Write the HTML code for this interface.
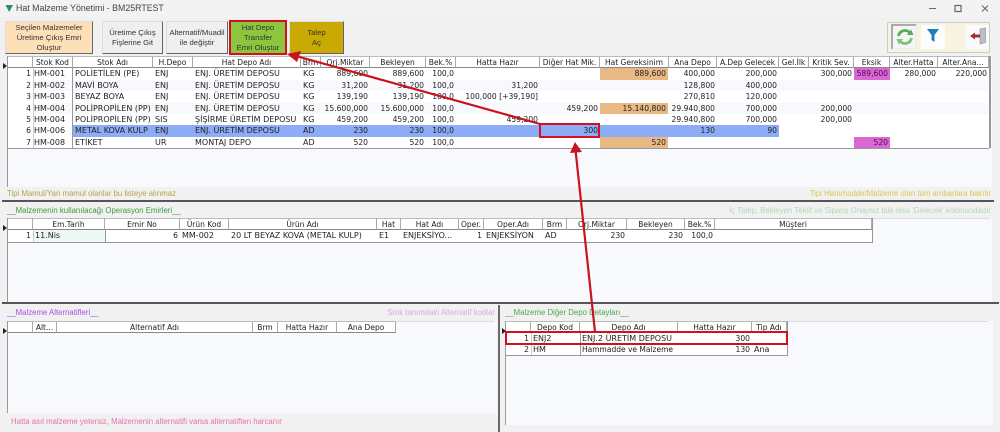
<!DOCTYPE html>
<html><head><meta charset="utf-8"><style>
html,body{margin:0;padding:0}
body{width:1000px;height:432px;position:relative;overflow:hidden;background:#f1f1f1;font-family:"DejaVu Sans","Liberation Sans",sans-serif;font-size:7.5px;color:#222}
div,span,b{position:absolute;box-sizing:border-box;white-space:nowrap;font-weight:normal}
.lb{font-family:"Liberation Sans",sans-serif;font-size:7.8px;line-height:10px}
.btn{font-family:"Liberation Sans",sans-serif;font-size:7.7px;line-height:10px;text-align:center;white-space:normal;color:#333;border-right:1.5px solid #666;border-bottom:1.5px solid #666;border-top:1px solid #ddd;border-left:1px solid #ddd;overflow:hidden}
.g{background:#f8f9fc}
.h{background:#fff;border-right:1px solid #aaa;border-bottom:1.5px solid #888;border-top:1px solid #bbb;text-align:center;height:12px;line-height:11px;overflow:hidden}
.c{height:11.5px;line-height:11.5px;padding:0 2px;overflow:hidden;font-size:8px}
.n{text-align:right;font-size:7.6px}
.sep{background:#555;height:2px;left:2px;width:992px}
.ln{background:#999}
.tl{background:#ddd;height:1px}
.sel{background:#8cacf6}
.or{background:#e8b985}
.mg{background:#da68d2}
.box{border:2px solid #d3101f}
</style></head><body>
<!-- title bar -->
<div style="left:0;top:0;width:1000px;height:17px;background:#f3f3f3"></div>
<svg style="position:absolute;left:5px;top:4px" width="9" height="9"><path d="M0.5 1H8L4.2 8Z" fill="#2a8a7a"/></svg>
<div class="lb" style="left:16px;top:3px;color:#444;font-size:8.8px">Hat Malzeme Yönetimi - BM25RTEST</div>
<svg style="position:absolute;left:925px;top:3px" width="70" height="12" fill="none" stroke="#666"><path d="M4 5.500H11"/><rect x="30" y="2.500" width="6" height="6" stroke-width="1.200"/><path d="M57 2.500L63 8.500M63 2.500L57 8.500"/></svg>
<!-- toolbar -->
<div class="btn" style="left:5px;top:21px;width:88px;height:33px;background:#fde0b8;padding-top:1px">Seçilen Malzemeler<br>Üretime Çıkış Emri<br>Oluştur</div>
<div class="btn" style="left:102px;top:21px;width:61px;height:33px;background:#efefef;padding-top:6px">Üretime Çıkış<br>Fişlerine Git</div>
<div class="btn" style="left:166px;top:21px;width:62px;height:33px;background:#efefef;padding-top:6px">Alternatif/Muadil<br>ile değiştir</div>
<div class="btn" style="left:230px;top:21px;width:56px;height:34px;background:#8cc63e;padding-top:1px">Hat Depo<br>Transfer<br>Emri Oluştur</div>
<div class="btn" style="left:289px;top:21px;width:55px;height:33px;background:#c9a902;padding-top:6px">Talep<br>Aç</div>
<div style="left:887px;top:22px;width:103px;height:31px;background:#f8f3df;border:1px solid #ccc"></div>
<div style="left:891px;top:24px;width:26px;height:26px;background:#f5f5f5;border:2px solid #aaa;border-right-color:#eee;border-bottom-color:#eee"></div>
<div style="left:921px;top:25px;width:24px;height:24px;background:#fdfdfd"></div>
<div style="left:965px;top:25px;width:24px;height:24px;background:#fafafa"></div>
<svg style="position:absolute;left:896px;top:28px" width="18" height="18" fill="none"><path d="M2.500 8A6.500 6.500 0 0 1 14 5" stroke="#5aa85a" stroke-width="2.800"/><path d="M15.500 10A6.500 6.500 0 0 1 4 13" stroke="#7cc47c" stroke-width="2.800"/><path d="M11 7H17.500L15 1.500Z" fill="#5aa85a"/><path d="M0.500 11H7L3 16.500Z" fill="#7cc47c"/></svg>
<svg style="position:absolute;left:927px;top:29px" width="12" height="14"><path d="M0 0H12L7.500 6V13L4.500 11V6Z" fill="#1f7fb5"/></svg>
<svg style="position:absolute;left:969px;top:27px" width="18" height="18"><path d="M11 2L16.500 1V15.500L11 17Z" fill="#b9c0c4" stroke="#889" stroke-width=".6"/><path d="M1 9L6 5.500V7.500H11V10.500H6V12.500Z" fill="#a82a35"/></svg>

<!-- panel 1 -->
<div class="g" style="left:8px;top:56px;width:984px;height:131px"></div>
<div class="ln" style="left:7px;top:56px;width:1px;height:131px"></div>
<div class="ln" style="left:989px;top:56px;width:1.500px;height:92px"></div>
<div style="left:8px;top:68px;width:981px;height:80px;background:#fff"></div>
<div style="left:33px;top:79.500px;width:956px;height:11.500px;background:#f8f9fc"></div>
<div style="left:33px;top:102.500px;width:956px;height:11.500px;background:#f8f9fc"></div>
<div class="h" style="left:8px;top:56px;width:25px"></div>
<div class="h" style="left:33px;top:56px;width:40px">Stok Kod</div>
<div class="h" style="left:73px;top:56px;width:80px">Stok Adı</div>
<div class="h" style="left:153px;top:56px;width:40px">H.Depo</div>
<div class="h" style="left:193px;top:56px;width:108px">Hat Depo Adı</div>
<div class="h" style="left:301px;top:56px;width:20px">Brm</div>
<div class="h" style="left:321px;top:56px;width:49px">Orj.Miktar</div>
<div class="h" style="left:370px;top:56px;width:56px">Bekleyen</div>
<div class="h" style="left:426px;top:56px;width:30px">Bek.%</div>
<div class="h" style="left:456px;top:56px;width:84px">Hatta Hazır</div>
<div class="h" style="left:540px;top:56px;width:60px">Diğer Hat Mik.</div>
<div class="h" style="left:600px;top:56px;width:69px">Hat Gereksinim</div>
<div class="h" style="left:669px;top:56px;width:48px">Ana Depo</div>
<div class="h" style="left:717px;top:56px;width:62px">A.Dep Gelecek</div>
<div class="h" style="left:779px;top:56px;width:30px">Gel.İlk</div>
<div class="h" style="left:809px;top:56px;width:45px">Kritik Sev.</div>
<div class="h" style="left:854px;top:56px;width:36px">Eksik</div>
<div class="h" style="left:890px;top:56px;width:48px">Alter.Hatta</div>
<div class="h" style="left:938px;top:56px;width:51px">Alter.Ana...</div>
<div style="left:3px;top:63px;width:0;height:0;border-left:4px solid #222;border-top:3px solid transparent;border-bottom:3px solid transparent"></div>

<!-- selected row + highlights -->
<div class="sel" style="left:73px;top:125px;width:644px;height:11.500px"></div>
<div class="sel" style="left:717px;top:125px;width:62px;height:11.500px"></div>
<div class="or" style="left:600px;top:68px;width:68px;height:11.500px"></div>
<div class="or" style="left:600px;top:102.500px;width:68px;height:11.500px"></div>
<div class="or" style="left:600px;top:137px;width:68px;height:11.500px"></div>
<div class="mg" style="left:854px;top:68px;width:36px;height:11.500px"></div>
<div class="mg" style="left:854px;top:137px;width:36px;height:11.500px"></div>
<div style="left:33px;top:68px;width:1px;height:80px;background:#ccc"></div>
<div class="ln" style="left:72px;top:68px;width:1px;height:80px"></div>
<div class="ln" style="left:8px;top:148px;width:981px;height:1px"></div>

<!-- row 1 -->
<div class="c n" style="left:8px;top:68px;width:25px">1</div><div class="c" style="left:33px;top:68px;width:40px;padding:0 1px">HM-001</div><div class="c" style="left:73px;top:68px;width:80px">POLİETİLEN (PE)</div><div class="c" style="left:153px;top:68px;width:40px">ENJ</div><div class="c" style="left:193px;top:68px;width:108px">ENJ. ÜRETİM DEPOSU</div><div class="c" style="left:301px;top:68px;width:20px">KG</div><div class="c n" style="left:321px;top:68px;width:49px">889,600</div><div class="c n" style="left:370px;top:68px;width:56px">889,600</div><div class="c n" style="left:426px;top:68px;width:30px">100,0</div><div class="c n" style="left:600px;top:68px;width:68px">889,600</div><div class="c n" style="left:669px;top:68px;width:48px">400,000</div><div class="c n" style="left:717px;top:68px;width:62px">200,000</div><div class="c n" style="left:809px;top:68px;width:45px">300,000</div><div class="c n" style="left:854px;top:68px;width:36px;color:#4a0a50">589,600</div><div class="c n" style="left:890px;top:68px;width:48px">280,000</div><div class="c n" style="left:938px;top:68px;width:51px">220,000</div>
<!-- row 2 -->
<div class="c n" style="left:8px;top:79.500px;width:25px">2</div><div class="c" style="left:33px;top:79.500px;width:40px;padding:0 1px">HM-002</div><div class="c" style="left:73px;top:79.500px;width:80px">MAVİ BOYA</div><div class="c" style="left:153px;top:79.500px;width:40px">ENJ</div><div class="c" style="left:193px;top:79.500px;width:108px">ENJ. ÜRETİM DEPOSU</div><div class="c" style="left:301px;top:79.500px;width:20px">KG</div><div class="c n" style="left:321px;top:79.500px;width:49px">31,200</div><div class="c n" style="left:370px;top:79.500px;width:56px">31,200</div><div class="c n" style="left:426px;top:79.500px;width:30px">100,0</div><div class="c n" style="left:456px;top:79.500px;width:84px">31,200</div><div class="c n" style="left:669px;top:79.500px;width:48px">128,800</div><div class="c n" style="left:717px;top:79.500px;width:62px">400,000</div>
<!-- row 3 -->
<div class="c n" style="left:8px;top:91px;width:25px">3</div><div class="c" style="left:33px;top:91px;width:40px;padding:0 1px">HM-003</div><div class="c" style="left:73px;top:91px;width:80px">BEYAZ BOYA</div><div class="c" style="left:153px;top:91px;width:40px">ENJ</div><div class="c" style="left:193px;top:91px;width:108px">ENJ. ÜRETİM DEPOSU</div><div class="c" style="left:301px;top:91px;width:20px">KG</div><div class="c n" style="left:321px;top:91px;width:49px">139,190</div><div class="c n" style="left:370px;top:91px;width:56px">139,190</div><div class="c n" style="left:426px;top:91px;width:30px">100,0</div><div class="c n" style="left:456px;top:91px;width:84px">100,000 [+39,190]</div><div class="c n" style="left:669px;top:91px;width:48px">270,810</div><div class="c n" style="left:717px;top:91px;width:62px">120,000</div>
<!-- row 4 -->
<div class="c n" style="left:8px;top:102.500px;width:25px">4</div><div class="c" style="left:33px;top:102.500px;width:40px;padding:0 1px">HM-004</div><div class="c" style="left:73px;top:102.500px;width:80px">POLİPROPİLEN (PP)</div><div class="c" style="left:153px;top:102.500px;width:40px">ENJ</div><div class="c" style="left:193px;top:102.500px;width:108px">ENJ. ÜRETİM DEPOSU</div><div class="c" style="left:301px;top:102.500px;width:20px">KG</div><div class="c n" style="left:321px;top:102.500px;width:49px">15.600,000</div><div class="c n" style="left:370px;top:102.500px;width:56px">15.600,000</div><div class="c n" style="left:426px;top:102.500px;width:30px">100,0</div><div class="c n" style="left:540px;top:102.500px;width:60px">459,200</div><div class="c n" style="left:600px;top:102.500px;width:68px">15.140,800</div><div class="c n" style="left:669px;top:102.500px;width:48px">29.940,800</div><div class="c n" style="left:717px;top:102.500px;width:62px">700,000</div><div class="c n" style="left:809px;top:102.500px;width:45px">200,000</div>
<!-- row 5 -->
<div class="c n" style="left:8px;top:114px;width:25px">5</div><div class="c" style="left:33px;top:114px;width:40px;padding:0 1px">HM-004</div><div class="c" style="left:73px;top:114px;width:80px">POLİPROPİLEN (PP)</div><div class="c" style="left:153px;top:114px;width:40px">SIS</div><div class="c" style="left:193px;top:114px;width:108px">ŞİŞİRME ÜRETİM DEPOSU</div><div class="c" style="left:301px;top:114px;width:20px">KG</div><div class="c n" style="left:321px;top:114px;width:49px">459,200</div><div class="c n" style="left:370px;top:114px;width:56px">459,200</div><div class="c n" style="left:426px;top:114px;width:30px">100,0</div><div class="c n" style="left:456px;top:114px;width:84px">459,200</div><div class="c n" style="left:669px;top:114px;width:48px">29.940,800</div><div class="c n" style="left:717px;top:114px;width:62px">700,000</div><div class="c n" style="left:809px;top:114px;width:45px">200,000</div>
<!-- row 6 -->
<div class="c n" style="left:8px;top:125px;width:25px">6</div><div class="c" style="left:33px;top:125px;width:40px;padding:0 1px">HM-006</div><div class="c" style="left:73px;top:125px;width:80px">METAL KOVA KULP</div><div class="c" style="left:153px;top:125px;width:40px">ENJ</div><div class="c" style="left:193px;top:125px;width:108px">ENJ. ÜRETİM DEPOSU</div><div class="c" style="left:301px;top:125px;width:20px">AD</div><div class="c n" style="left:321px;top:125px;width:49px">230</div><div class="c n" style="left:370px;top:125px;width:56px">230</div><div class="c n" style="left:426px;top:125px;width:30px">100,0</div><div class="c n" style="left:540px;top:125px;width:60px">300</div><div class="c n" style="left:669px;top:125px;width:48px">130</div><div class="c n" style="left:717px;top:125px;width:62px">90</div>
<!-- row 7 -->
<div class="c n" style="left:8px;top:137px;width:25px">7</div><div class="c" style="left:33px;top:137px;width:40px;padding:0 1px">HM-008</div><div class="c" style="left:73px;top:137px;width:80px">ETİKET</div><div class="c" style="left:153px;top:137px;width:40px">UR</div><div class="c" style="left:193px;top:137px;width:108px">MONTAJ DEPO</div><div class="c" style="left:301px;top:137px;width:20px">AD</div><div class="c n" style="left:321px;top:137px;width:49px">520</div><div class="c n" style="left:370px;top:137px;width:56px">520</div><div class="c n" style="left:426px;top:137px;width:30px">100,0</div><div class="c n" style="left:600px;top:137px;width:68px">520</div><div class="c n" style="left:854px;top:137px;width:36px;color:#4a0a50">520</div>

<div class="lb" style="left:7px;top:188.500px;color:#b5a34a">Tipi Mamul/Yan mamul olanlar bu listeye alınmaz</div>
<div class="lb" style="right:9px;top:188.500px;color:#dcc45a">Tipi Hammadde/Malzeme olan tüm ambarlara bakılır</div>
<div class="sep" style="top:200px"></div>

<!-- panel 2 -->
<div class="lb" style="left:7px;top:205.500px;color:#3f9a3f">__Malzemenin kullanılacağı Operasyon Emirleri__</div>
<div class="lb" style="right:9px;top:205.500px;color:#b9d6b9">İç Talep, Bekleyen Teklif ve Sipariş Onaysız bile olsa 'Gelecek' kolonundadır</div>
<div class="g" style="left:8px;top:218px;width:984px;height:84px"></div>
<div class="tl" style="left:872px;top:218px;width:118px"></div>
<div class="ln" style="left:7px;top:218px;width:1px;height:84px"></div>
<div style="left:8px;top:230px;width:864px;height:12px;background:#fff"></div>
<div style="left:33px;top:230px;width:72px;height:12px;background:#eef9f4"></div>
<div class="h" style="left:8px;top:218px;width:25px"></div>
<div class="h" style="left:33px;top:218px;width:72px">Em.Tarih</div>
<div class="h" style="left:105px;top:218px;width:75px">Emir No</div>
<div class="h" style="left:180px;top:218px;width:49px">Ürün Kod</div>
<div class="h" style="left:229px;top:218px;width:148px">Ürün Adı</div>
<div class="h" style="left:377px;top:218px;width:24px">Hat</div>
<div class="h" style="left:401px;top:218px;width:58px">Hat Adı</div>
<div class="h" style="left:459px;top:218px;width:25px">Oper.</div>
<div class="h" style="left:484px;top:218px;width:59px">Oper.Adı</div>
<div class="h" style="left:543px;top:218px;width:24px">Brm</div>
<div class="h" style="left:567px;top:218px;width:60px">Orj.Miktar</div>
<div class="h" style="left:627px;top:218px;width:58px">Bekleyen</div>
<div class="h" style="left:685px;top:218px;width:30px">Bek.%</div>
<div class="h" style="left:715px;top:218px;width:157px">Müşteri</div>
<div style="left:3px;top:225px;width:0;height:0;border-left:4px solid #222;border-top:3px solid transparent;border-bottom:3px solid transparent"></div>
<div style="left:33px;top:230px;width:1px;height:12px;background:#ccc"></div>
<div class="ln" style="left:105px;top:230px;width:1px;height:12px"></div>
<div class="ln" style="left:8px;top:242px;width:864px;height:1px"></div>
<div class="ln" style="left:872px;top:218px;width:1px;height:25px"></div>
<div class="c n" style="left:8px;top:230px;width:25px">1</div><div class="c" style="left:33px;top:230px;width:72px">11.Nis</div><div class="c n" style="left:105px;top:230px;width:75px">6</div><div class="c" style="left:180px;top:230px;width:49px">MM-002</div><div class="c" style="left:229px;top:230px;width:148px">20 LT BEYAZ KOVA (METAL KULP)</div><div class="c" style="left:377px;top:230px;width:24px">E1</div><div class="c" style="left:401px;top:230px;width:58px">ENJEKSİYO...</div><div class="c n" style="left:459px;top:230px;width:25px">1</div><div class="c" style="left:484px;top:230px;width:59px">ENJEKSİYON</div><div class="c" style="left:543px;top:230px;width:24px">AD</div><div class="c n" style="left:567px;top:230px;width:60px">230</div><div class="c n" style="left:627px;top:230px;width:58px">230</div><div class="c n" style="left:685px;top:230px;width:30px">100,0</div>
<div class="sep" style="top:302px;width:997px"></div>

<!-- panel 3 -->
<div class="lb" style="left:7px;top:307.500px;color:#a94fe0">__Malzeme Alternatifleri__</div>
<div class="lb" style="right:505px;top:307.500px;color:#e0a8e0">Stok tanımdaki Alternatif kodlar</div>
<div class="g" style="left:8px;top:321px;width:489px;height:92px"></div>
<div class="tl" style="left:396px;top:321px;width:98px"></div>
<div class="ln" style="left:7px;top:321px;width:1px;height:92px"></div>
<div class="h" style="left:8px;top:321px;width:25px"></div>
<div class="h" style="left:33px;top:321px;width:24px">Alt...</div>
<div class="h" style="left:57px;top:321px;width:196px">Alternatif Adı</div>
<div class="h" style="left:253px;top:321px;width:25px">Brm</div>
<div class="h" style="left:278px;top:321px;width:59px">Hatta Hazır</div>
<div class="h" style="left:337px;top:321px;width:59px">Ana Depo</div>
<div style="left:3px;top:328px;width:0;height:0;border-left:4px solid #222;border-top:3px solid transparent;border-bottom:3px solid transparent"></div>
<div class="lb" style="left:11px;top:416.500px;color:#e870b0">Hatta asıl malzeme yetersiz, Malzemenin alternatifi varsa alternatiften harcanır</div>
<div style="left:498px;top:305px;width:2px;height:127px;background:#6a6a6a"></div>

<!-- panel 4 -->
<div class="lb" style="left:505px;top:307.500px;color:#4aa84a">__Malzeme Diğer Depo Detayları__</div>
<div class="g" style="left:506px;top:321px;width:487px;height:104px"></div>
<div class="tl" style="left:787px;top:321px;width:201px"></div>
<div class="ln" style="left:505px;top:321px;width:1px;height:104px"></div>
<div style="left:506px;top:332px;width:281px;height:23px;background:#fff"></div>
<div class="h" style="left:506px;top:321px;width:25px"></div>
<div class="h" style="left:531px;top:321px;width:49px">Depo Kod</div>
<div class="h" style="left:580px;top:321px;width:98px">Depo Adı</div>
<div class="h" style="left:678px;top:321px;width:74px">Hatta Hazır</div>
<div class="h" style="left:752px;top:321px;width:35px">Tip Adı</div>
<div style="left:502px;top:328px;width:0;height:0;border-left:4px solid #222;border-top:3px solid transparent;border-bottom:3px solid transparent"></div>
<div style="left:531px;top:332px;width:1px;height:23px;background:#ccc"></div>
<div class="ln" style="left:580px;top:332px;width:1px;height:23px"></div>
<div class="ln" style="left:506px;top:355px;width:281px;height:1px"></div>
<div class="ln" style="left:787px;top:321px;width:1px;height:35px"></div>
<div class="c n" style="left:506px;top:332.500px;width:25px">1</div><div class="c" style="left:531px;top:332.500px;width:49px">ENJ2</div><div class="c" style="left:580px;top:332.500px;width:98px">ENJ.2 ÜRETİM DEPOSU</div><div class="c n" style="left:678px;top:332.500px;width:74px">300</div>
<div class="c n" style="left:506px;top:344px;width:25px">2</div><div class="c" style="left:531px;top:344px;width:49px">HM</div><div class="c" style="left:580px;top:344px;width:98px;font-size:7.5px">Hammadde ve Malzeme</div><div class="c n" style="left:678px;top:344px;width:74px">130</div><div class="c" style="left:752px;top:344px;width:35px">Ana</div>

<!-- annotations -->
<div class="box" style="left:229px;top:20px;width:58px;height:35px"></div>
<div class="box" style="left:539px;top:123px;width:61px;height:15px"></div>
<div class="box" style="left:505px;top:331px;width:283px;height:14px"></div>
<svg style="position:absolute;left:0;top:0" width="1000" height="432" fill="none">
<path d="M540 124L298 56.500" stroke="#c8141f" stroke-width="2.200"/>
<path d="M287 54L301 51L297 62Z" fill="#c8141f"/>
<path d="M595 332L575.500 150" stroke="#c8141f" stroke-width="2.200"/>
<path d="M575 142L570 153L582 152Z" fill="#c8141f"/>
</svg>
</body></html>
